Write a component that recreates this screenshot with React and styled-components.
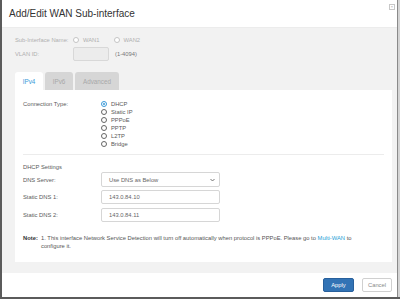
import React from "react";
import styled, { createGlobalStyle } from "styled-components";

const GlobalStyle = createGlobalStyle`
  html, body { margin: 0; padding: 0; }
  body {
    width: 400px;
    height: 299px;
    overflow: hidden;
    background: #5b5b5b;
    font-family: "Liberation Sans", Arial, sans-serif;
  }
`;

const Page = styled.div`
  display: flex;
  height: 297px;
  padding-left: 2px;
`;

const Modal = styled.div`
  width: 396px;
  height: 297px;
  background: #fff;
  display: flex;
  flex-direction: column;
  border-right: 1px solid #8a8a8a;
  box-sizing: border-box;
`;

const Gutter = styled.div`
  width: 2px;
  background: #d4d4d4;
`;

const Header = styled.div`
  height: 28px;
  display: flex;
  justify-content: space-between;
  align-items: flex-start;
  padding-left: 7px;
  padding-right: 2px;
  border-bottom: 1px solid #ececec;
  box-sizing: border-box;
`;

const Title = styled.h1`
  margin: 0;
  margin-top: 8px;
  font-size: 10px;
  font-weight: normal;
  color: #333;
  line-height: 12px;
`;

const Close = styled.div`
  margin-top: 4px;
  width: 4px;
  height: 4px;
  display: flex;
  align-items: center;
  justify-content: center;
  color: #999;
  border: 1px solid #c8c8c8;
  font-size: 4px;
  line-height: 4px;
`;

const Body = styled.div`
  flex: 1;
  background: #f2f2f2;
  padding: 6px 5px 10px 13px;
  display: flex;
  flex-direction: column;
`;

const TopRow = styled.div`
  display: flex;
  align-items: center;
  height: ${(p) => p.h}px;
  font-size: 5.8px;
  color: #b0b0b0;
`;

const TopLabel = styled.div`
  width: 58px;
`;

const Radio = styled.span`
  width: 4px;
  height: 4px;
  border-radius: 50%;
  border: 1px solid ${(p) => (p.on ? "#3a9ad9" : p.dim ? "#c4c4c4" : "#666")};
  background: #fff;
  display: inline-flex;
  align-items: center;
  justify-content: center;
  margin-right: 4px;
  flex-shrink: 0;
  &::after {
    content: "";
    width: 2px;
    height: 2px;
    border-radius: 50%;
    background: ${(p) => (p.on ? "#3a9ad9" : "transparent")};
  }
`;

const Choice = styled.label`
  display: flex;
  align-items: center;
  margin-right: ${(p) => p.gap || 0}px;
`;

const SmallBox = styled.div`
  width: 34px;
  height: 12px;
  border: 1px solid #d8d8d8;
  background: #ececec;
  border-radius: 2px;
  margin-right: 6px;
`;

const Tabs = styled.div`
  display: flex;
  margin-top: 10px;
  height: 18px;
  align-items: flex-end;
`;

const Tab = styled.div`
  height: 18px;
  width: ${(p) => p.w}px;
  margin-right: 2px;
  border-radius: 3px 3px 0 0;
  background: ${(p) => (p.active ? "#fff" : "#d6d6d6")};
  color: ${(p) => (p.active ? "#3a9ad9" : "#a8a8a8")};
  font-size: 6.3px;
  display: flex;
  align-items: center;
  justify-content: center;
`;

const Panel = styled.div`
  background: #fff;
  height: 172px;
  padding: 10px 8px 0 8px;
  box-sizing: border-box;
  font-size: 5.8px;
  color: #5a5a5a;
`;

const Row = styled.div`
  display: flex;
  align-items: ${(p) => p.align || "center"};
  margin-bottom: ${(p) => p.mb || 0}px;
`;

const Label = styled.div`
  width: 78px;
  flex-shrink: 0;
  line-height: 8px;
`;

const Options = styled.div`
  display: flex;
  flex-direction: column;
`;

const Option = styled.div`
  display: flex;
  align-items: center;
  height: 8px;
`;

const Divider = styled.div`
  height: 1px;
  background: #ececec;
  margin: 6px 0 8px 0;
`;

const Section = styled.div`
  line-height: 8px;
  margin-bottom: 1px;
`;

const Field = styled.div`
  width: 119px;
  height: ${(p) => p.h}px;
  border: 1px solid #d6d6d6;
  border-radius: 2px;
  box-sizing: border-box;
  display: flex;
  align-items: center;
  justify-content: space-between;
  padding: 0 4px 0 7px;
  color: #666;
`;

const Note = styled.div`
  display: flex;
  margin-top: 12px;
  line-height: 8px;
  color: #555;
`;

const NoteLabel = styled.b`
  width: 18px;
  flex-shrink: 0;
  color: #333;
`;

const Link = styled.a`
  color: #2a9fd6;
  text-decoration: none;
`;

const Footer = styled.div`
  height: 24px;
  display: flex;
  justify-content: flex-end;
  align-items: center;
  padding-right: 5px;
  gap: 8px;
`;

const Button = styled.button`
  width: ${(p) => p.w}px;
  height: 14px;
  padding: 0;
  font-family: inherit;
  font-size: 5.8px;
  border-radius: 2px;
  border: 1px solid ${(p) => (p.primary ? "#28609c" : "#d0d0d0")};
  background: ${(p) => (p.primary ? "#3273b5" : "#fff")};
  color: ${(p) => (p.primary ? "#fff" : "#888")};
`;

export default function App() {
  return (
    <>
      <GlobalStyle />
      <Page>
        <Modal>
          <Header>
            <Title>Add/Edit WAN Sub-interface</Title>
            <Close>×</Close>
          </Header>
          <Body>
            <TopRow h={11}>
              <TopLabel>Sub-Interface Name:</TopLabel>
              <Choice gap={14}>
                <Radio dim />
                WAN1
              </Choice>
              <Choice>
                <Radio dim />
                WAN2
              </Choice>
            </TopRow>
            <TopRow h={17}>
              <TopLabel>VLAN ID:</TopLabel>
              <SmallBox />
              <span style={{ color: "#777" }}>(1-4094)</span>
            </TopRow>
            <Tabs>
              <Tab w={28} active>IPv4</Tab>
              <Tab w={28}>IPv6</Tab>
              <Tab w={44}>Advanced</Tab>
            </Tabs>
            <Panel>
              <Row align="flex-start">
                <Label>Connection Type:</Label>
                <Options>
                  <Option><Radio on />DHCP</Option>
                  <Option><Radio />Static IP</Option>
                  <Option><Radio />PPPoE</Option>
                  <Option><Radio />PPTP</Option>
                  <Option><Radio />L2TP</Option>
                  <Option><Radio />Bridge</Option>
                </Options>
              </Row>
              <Divider />
              <Section>DHCP Settings</Section>
              <Row mb={3}>
                <Label>DNS Server:</Label>
                <Field h={15}>
                  Use DNS as Below
                  <svg width="5" height="4" viewBox="0 0 5 4">
                    <path d="M0.5 1 L2.5 3 L4.5 1" fill="none" stroke="#666" strokeWidth="0.9" />
                  </svg>
                </Field>
              </Row>
              <Row mb={4}>
                <Label>Static DNS 1:</Label>
                <Field h={14}>143.0.84.10</Field>
              </Row>
              <Row>
                <Label>Static DNS 2:</Label>
                <Field h={14}>143.0.84.11</Field>
              </Row>
              <Note>
                <NoteLabel>Note:</NoteLabel>
                <div>
                  1. This interface Network Service Detection will turn off automatically when protocol is PPPoE. Please go to <Link>Multi-WAN</Link> to
                  <br />
                  configure it.
                </div>
              </Note>
            </Panel>
          </Body>
          <Footer>
            <Button primary w={31}>Apply</Button>
            <Button w={30}>Cancel</Button>
          </Footer>
        </Modal>
        <Gutter />
      </Page>
    </>
  );
}
